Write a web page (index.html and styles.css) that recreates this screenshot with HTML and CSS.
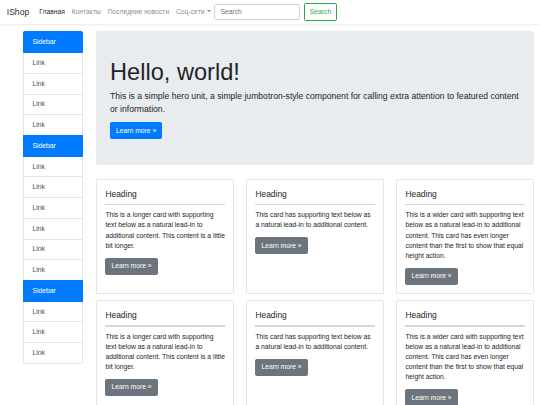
FILE: index.html
```html
<!DOCTYPE html>
<html lang="ru">
<head>
  <meta charset="UTF-8" />
  <meta name="viewport" content="width=device-width, initial-scale=1.0"/>
  <title>IShop</title>
  <link rel="stylesheet" href="styles.css">
</head>
<body>
  <nav class="navbar">
    <a class="brand" href="#">IShop</a>
    <ul class="nav-links">
      <li><a class="nav-link active" href="#">Главная</a></li>
      <li><a class="nav-link" href="#">Контакты</a></li>
      <li><a class="nav-link" href="#">Последние новости</a></li>
      <li><a class="nav-link dropdown" href="#">Соц-сети</a></li>
    </ul>
    <form class="search-form">
      <input class="search-input" type="search" placeholder="Search">
      <button class="btn btn-outline-success" type="button">Search</button>
    </form>
  </nav>

  <div class="page">
    <aside class="sidebar">
      <a class="list-item active" href="#">Sidebar</a>
      <a class="list-item" href="#">Link</a>
      <a class="list-item" href="#">Link</a>
      <a class="list-item" href="#">Link</a>
      <a class="list-item" href="#">Link</a>
      <a class="list-item active" href="#">Sidebar</a>
      <a class="list-item" href="#">Link</a>
      <a class="list-item" href="#">Link</a>
      <a class="list-item" href="#">Link</a>
      <a class="list-item" href="#">Link</a>
      <a class="list-item" href="#">Link</a>
      <a class="list-item" href="#">Link</a>
      <a class="list-item active" href="#">Sidebar</a>
      <a class="list-item" href="#">Link</a>
      <a class="list-item" href="#">Link</a>
      <a class="list-item" href="#">Link</a>
    </aside>

    <main class="content">
      <div class="hero">
        <h1 class="hero-title">Hello, world!</h1>
        <p class="lead">This is a simple hero unit, a simple jumbotron-style component for calling extra attention to featured content or information.</p>
        <a class="btn btn-primary" href="#">Learn more &raquo;</a>
      </div>

      <div class="cards">
        <div class="card">
          <h5 class="card-title">Heading</h5>
          <hr class="card-line">
          <p class="card-text">This is a longer card with supporting text below as a natural lead-in to additional content. This content is a little bit longer.</p>
          <a class="btn btn-secondary" href="#">Learn more &raquo;</a>
        </div>
        <div class="card">
          <h5 class="card-title">Heading</h5>
          <hr class="card-line">
          <p class="card-text">This card has supporting text below as a natural lead-in to additional content.</p>
          <a class="btn btn-secondary" href="#">Learn more &raquo;</a>
        </div>
        <div class="card">
          <h5 class="card-title">Heading</h5>
          <hr class="card-line">
          <p class="card-text">This is a wider card with supporting text below as a natural lead-in to additional content. This card has even longer content than the first to show that equal height action.</p>
          <a class="btn btn-secondary" href="#">Learn more &raquo;</a>
        </div>
        <div class="card">
          <h5 class="card-title">Heading</h5>
          <hr class="card-line">
          <p class="card-text">This is a longer card with supporting text below as a natural lead-in to additional content. This content is a little bit longer.</p>
          <a class="btn btn-secondary" href="#">Learn more &raquo;</a>
        </div>
        <div class="card">
          <h5 class="card-title">Heading</h5>
          <hr class="card-line">
          <p class="card-text">This card has supporting text below as a natural lead-in to additional content.</p>
          <a class="btn btn-secondary" href="#">Learn more &raquo;</a>
        </div>
        <div class="card">
          <h5 class="card-title">Heading</h5>
          <hr class="card-line">
          <p class="card-text">This is a wider card with supporting text below as a natural lead-in to additional content. This card has even longer content than the first to show that equal height action.</p>
          <a class="btn btn-secondary" href="#">Learn more &raquo;</a>
        </div>
      </div>
    </main>
  </div>
</body>
</html>
```

FILE: styles.css
```css
* {
  box-sizing: border-box;
}

html, body {
  margin: 0;
  padding: 0;
}

body {
  font-family: "Liberation Sans", Arial, sans-serif;
  font-size: 6.75px;
  line-height: 10.125px;
  color: #212529;
  background: #fff;
}

a {
  text-decoration: none;
}

/* navbar */
.navbar {
  display: flex;
  align-items: center;
  padding: 3.4px 6.75px;
  background: #fff;
  box-shadow: 0 1px 2px rgba(0,0,0,0.09);
}

.brand {
  font-size: 8.6px;
  line-height: 12.66px;
  padding: 2.1px 0;
  margin-right: 6.6px;
  color: rgba(0,0,0,0.9);
}

.nav-links {
  display: flex;
  list-style: none;
  margin: 0;
  padding: 0;
}

.nav-link {
  display: block;
  padding: 3.4px;
  color: rgba(0,0,0,0.5);
}

.nav-link.active {
  color: rgba(0,0,0,0.9);
}

.nav-link.dropdown::after {
  content: "";
  display: inline-block;
  margin-left: 2px;
  vertical-align: 1.7px;
  border-top: 2px solid;
  border-left: 2px solid transparent;
  border-right: 2px solid transparent;
}

.search-form {
  display: flex;
  align-items: center;
  margin-left: 0.5px;
}

.search-input {
  width: 86px;
  height: 16px;
  padding: 2.5px 5px;
  font-family: inherit;
  font-size: 6.75px;
  color: #495057;
  border: 1px solid #ced4da;
  border-radius: 1.7px;
  margin-right: 3.4px;
  outline: none;
}

.search-input::placeholder {
  color: #6c757d;
}

/* buttons */
.btn {
  display: inline-block;
  font-family: inherit;
  font-size: 6.75px;
  line-height: 10.125px;
  padding: 2.5px 5px;
  border: 1px solid transparent;
  border-radius: 1.7px;
  cursor: pointer;
}

.btn-primary {
  background: #007bff;
  border-color: #007bff;
  color: #fff;
}

.btn-secondary {
  background: #6c757d;
  border-color: #6c757d;
  color: #fff;
}

.btn-outline-success {
  background: #fff;
  border-color: #28a745;
  color: #28a745;
}

/* page */
.page {
  display: flex;
  align-items: flex-start;
  gap: 13px;
  padding: 7.5px 6px 0 23px;
}

.sidebar {
  width: 60px;
  flex-shrink: 0;
  display: flex;
  flex-direction: column;
}

.list-item {
  position: relative;
  display: block;
  padding: 4.8px 8.5px;
  margin-bottom: -1px;
  color: #495057;
  background: #fff;
  border: 1px solid rgba(0,0,0,0.1);
}

.list-item:first-child {
  border-radius: 1.7px 1.7px 0 0;
}

.list-item:last-child {
  border-radius: 0 0 1.7px 1.7px;
}

.list-item.active {
  z-index: 2;
  color: #fff;
  background: #007bff;
  border-color: #007bff;
}

.content {
  flex: 1;
  min-width: 0;
}

.hero {
  display: flex;
  flex-direction: column;
  align-items: flex-start;
  background: #e9ecef;
  border-radius: 2.5px;
  padding: 27px 14px 26px;
  margin-bottom: 13.8px;
}

.hero-title {
  margin: 0 0 3.4px;
  font-size: 23.6px;
  line-height: 28.35px;
  font-weight: 300;
}

.lead {
  margin: 0 0 6.75px;
  font-size: 8.62px;
  line-height: 12.66px;
}

.cards {
  display: grid;
  grid-template-columns: repeat(3, 1fr);
  column-gap: 12px;
  row-gap: 6.3px;
}

.card {
  display: flex;
  flex-direction: column;
  align-items: flex-start;
  background: #fff;
  border: 1px solid rgba(0,0,0,0.1);
  border-radius: 1.7px;
  padding: 8.4px 7px 8.4px 8.4px;
}

.card-title {
  margin: 0 0 5px;
  font-size: 8.44px;
  line-height: 10.1px;
  font-weight: 400;
}

.card-line {
  align-self: stretch;
  margin: 0 1.4px 5px 0;
  border: none;
  height: 1.7px;
  background: #d6d6d6;
}

.card-text {
  margin: 0 0 6.75px;
  color: #212529;
}
```
